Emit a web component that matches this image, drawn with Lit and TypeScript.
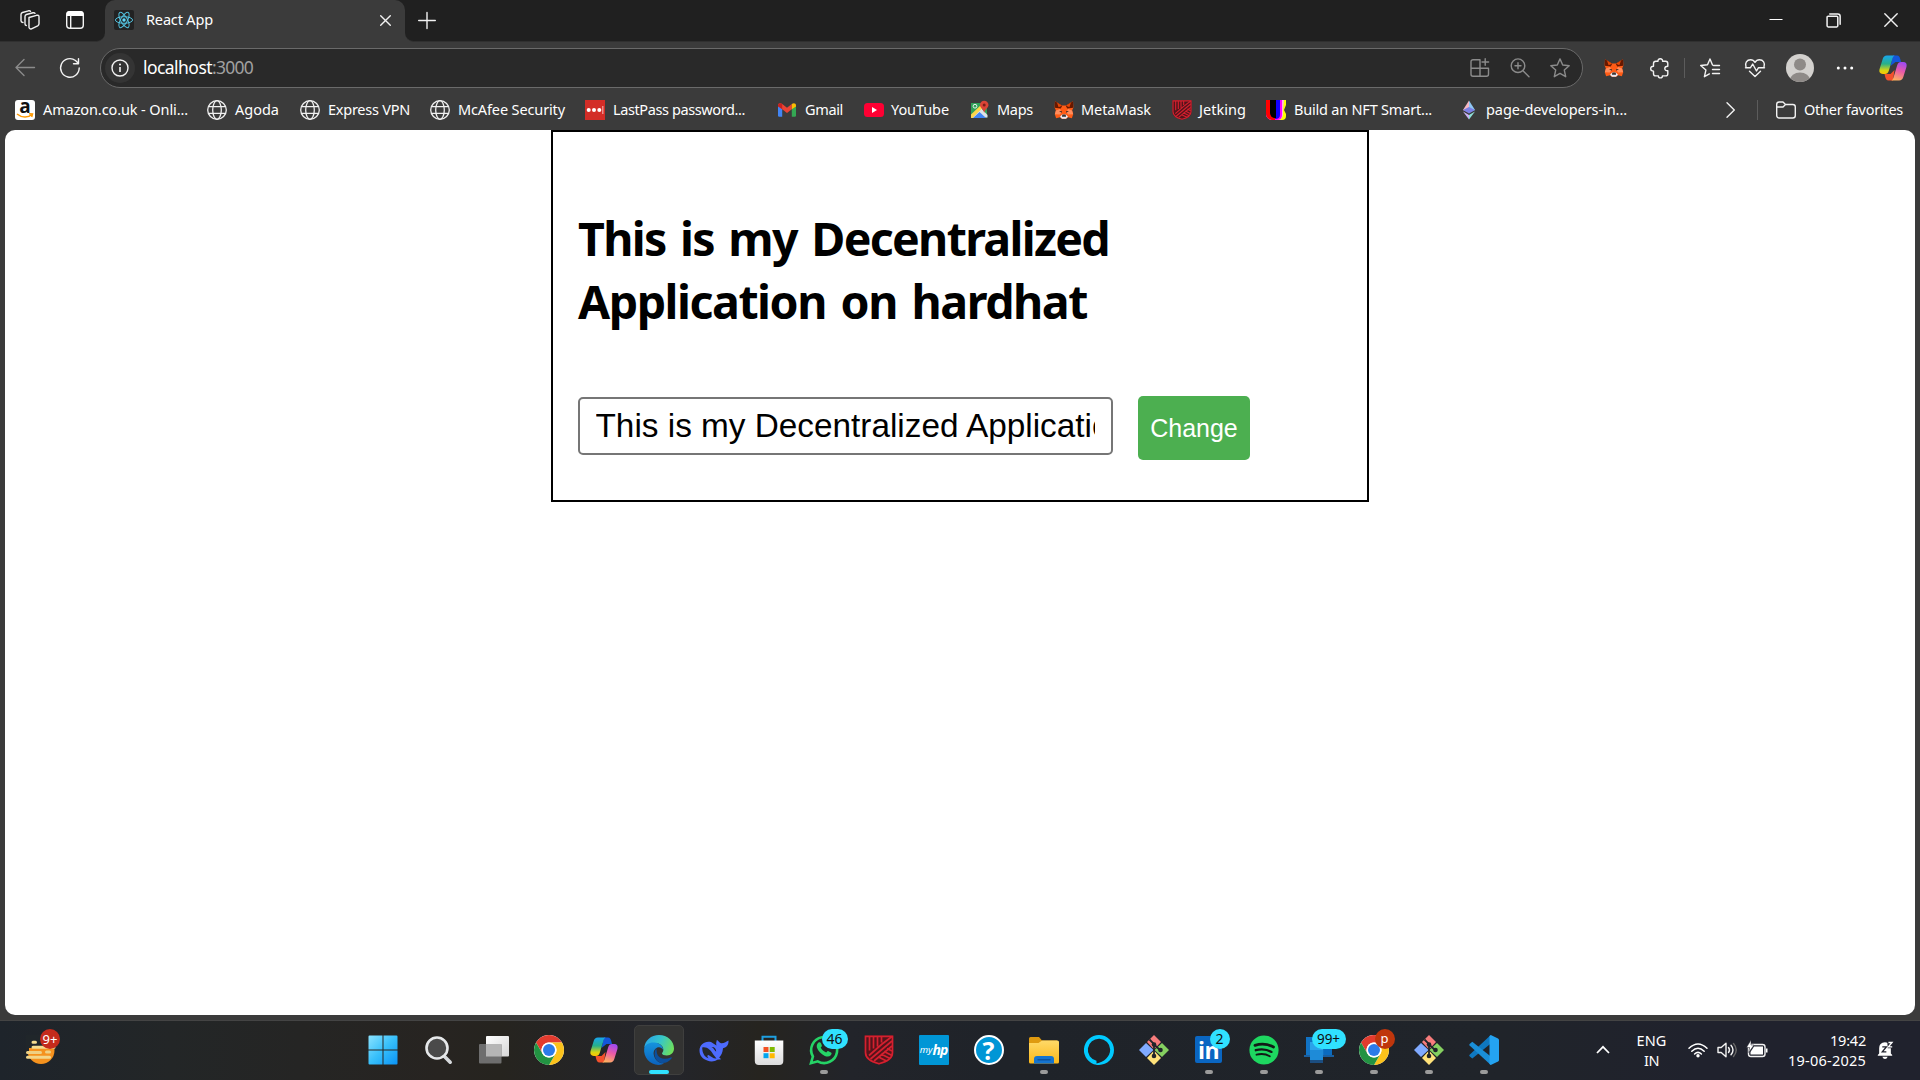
import { LitElement, html, css, svg, nothing } from "lit";
import { customElement } from "lit/decorators.js";

const fit = (text: string, width: number, cls = "") =>
  html`<span class="fit ${cls}" data-w=${width}>${text}</span>`;

const icon = (size: number, box: string, body: unknown, cls = "") =>
  html`<svg class="ico ${cls}" width=${size} height=${size} viewBox=${box}>${body}</svg>`;

const globe = () =>
  icon(20, "0 0 20 20", svg`<g fill="none" stroke="#f0f0f0" stroke-width="1.3">
    <circle cx="10" cy="10" r="9.3"/><ellipse cx="10" cy="10" rx="4.3" ry="9.3"/>
    <path d="M1.6 6.7h16.8M1.6 13.3h16.8"/></g>`);

const fox = (size: number) =>
  icon(size, "0 0 20 20", svg`
    <path d="M1 1.2 8 5.5h4l7-4.3.4 6.3-1.2 2.8 1 4-1.3 4-3.9-1-2 1.7H8l-2-1.7-3.9 1-1.3-4 1-4L.6 7.5z" fill="#ff5c16"/>
    <path d="M1 1.2 8.2 5.7 6.8 8.6.7 7.8zM19 1.2l-7.2 4.5 1.4 2.9 6.1-.8z" fill="#661800"/>
    <path d="M3 2.5 8 5.7 4.6 7.3zM17 2.5l-5 3.2 3.4 1.6z" fill="#e34807"/>
    <path d="M2 10.5 6 9l1.6 3.2-1.8 2.2-5-.2zM18 10.5 14 9l-1.6 3.2 1.8 2.2 5-.2z" fill="#ff8d5d"/>
    <path d="m5 11.2 2.7-.1.3 1.6zM15 11.2l-2.7-.1-.3 1.6z" fill="#3a2a25"/>
    <path d="m6 16.8 2.2-2.2h3.6l2.2 2.2-2 1.900H8z" fill="#e7ebf6"/>
    <path d="m8 15.5.5-.9h3l.5.9v1.2H8z" fill="#393332"/>`);

const shield = (size: number) =>
  icon(size, "0 0 30 30", svg`
    <path d="M.8.5h28.4v17c0 6-4 9.500-14.200 12C4.800 27 .8 23.500.8 17.500z" fill="#54141b"/>
    <g fill="none" stroke="#d5202f" stroke-width="1.700">
      <path d="M1.500 1.300h27v16.200c0 5.500-4 8.800-13.500 11.300C5.500 26.300 1.500 23 1.500 17.500z"/>
      <path d="M5.500 1.500v14M9.500 1.500v12M13.500 1.500v10M17.500 1.500v6M5 20.500 17.500 9.500 28 1.500M6.500 24 28 6M10 26 28 11M14.500 22l8 4M17 19l9 4.500M20 16.500l8 4M23 13.500l5 2.500"/>
    </g>`);

const copilot = (size: number, id: string, cls = "") =>
  icon(size, "0 0 28 28", svg`
    <defs>
      <linearGradient id="${id}a" x1="0" y1="0" x2="0" y2="1"><stop offset="0" stop-color="#18a5ee"/><stop offset=".45" stop-color="#27b08a"/><stop offset=".8" stop-color="#d7d514"/><stop offset="1" stop-color="#ffc400"/></linearGradient>
      <linearGradient id="${id}b" x1=".6" y1="0" x2=".3" y2="1"><stop offset="0" stop-color="#a04af0"/><stop offset=".45" stop-color="#ea5aa8"/><stop offset="1" stop-color="#ffb25e"/></linearGradient>
    </defs>
    <path d="M14 1.500h4c2 0 2.600 1.400 3.200 3.300L22 8h-5.500l-5 4z" fill="#1456d9"/>
    <path d="M14 26.500h-4.500c-2 0-2.600-1.300-3.200-3.200L5.500 20h6l4-4z" fill="#f4512c"/>
    <path d="M8 1.500h7.800c-1.600.5-2.100 2-2.700 4.200l-3.300 11C9 19 8 20 6 20H3.800C1 20-.2 18 .5 15.300L3.700 5C4.400 2.700 5.500 1.500 8 1.500z" fill="url(#${id}a)"/>
    <path d="M20 26.500h-7.800c1.600-.5 2.100-2 2.700-4.200l3.300-11C19 9 20 8 22 8h2.200c2.800 0 4 2 3.300 4.700L24.300 23c-.7 2.300-1.800 3.500-4.300 3.500z" fill="url(#${id}b)"/>`, cls);

const chrome = () =>
  icon(30, "2 2 44 44", svg`
    <circle cx="24" cy="24" r="22" fill="#fff"/>
    <path d="M24 13h19.050A22 22 0 0 0 4.950 13l9.520 16.500A11 11 0 0 1 24 13z" fill="#e33b2e"/>
    <path d="M24 13h19.050A22 22 0 0 0 4.950 13l9.520 16.500A11 11 0 0 1 24 13z" fill="#fcc21b" transform="rotate(120 24 24)"/>
    <path d="M24 13h19.050A22 22 0 0 0 4.950 13l9.520 16.500A11 11 0 0 1 24 13z" fill="#229342" transform="rotate(240 24 24)"/>
    <circle cx="24" cy="24" r="11" fill="#fff"/><circle cx="24" cy="24" r="8.800" fill="#2c7be9"/>`);

const git = () =>
  icon(30, "0 0 30 30", svg`
    <path d="M15 0l7 7-7 7.500L8 7z" fill="#f77c7c"/><path d="M23 8l7 7-7 7-7.500-7z" fill="#85d060"/>
    <path d="M15 15.500l7 7.500-7 7-7-7z" fill="#ffe27a"/><path d="M7 8l7.500 7L7 22l-7-7z" fill="#80aaff"/>
    <path d="M10.500 4.500 15 9v12M15 9.500l6 5.500" stroke="#20242a" stroke-width="1.800" fill="none"/>
    <g fill="#20242a"><circle cx="15" cy="9.500" r="2.300"/><circle cx="21.500" cy="15" r="2.300"/><circle cx="15" cy="21" r="2.300"/></g>`);

const start = icon(30, "0 0 30 30", svg`
  <defs><linearGradient id="win" x1="0" y1="0" x2="1" y2="1"><stop offset="0" stop-color="#8be3ff"/><stop offset=".5" stop-color="#37bffa"/><stop offset="1" stop-color="#0a93f5"/></linearGradient></defs>
  <path d="M1.500.5h13v14h-14V1.500a1 1 0 0 1 1-1zM15.500.5h13a1 1 0 0 1 1 1v13h-14zM.5 15.500h14v14h-13a1 1 0 0 1-1-1zM15.500 15.500h14v13a1 1 0 0 1-1 1h-13z" fill="url(#win)"/>`, "start");

const search = icon(30, "0 0 30 30", svg`
  <path d="m20.500 21.500 5.700 5.700" stroke="#d6d9dc" stroke-width="3.600" stroke-linecap="round"/>
  <circle cx="13" cy="13" r="10.500" fill="#4a4a4a" stroke="#e6e8ea" stroke-width="2.600"/>`);

const taskView = icon(30, "0 0 30 30", svg`
  <defs><linearGradient id="tv" x1="0" y1="0" x2="1" y2="1"><stop offset="0" stop-color="#fff"/><stop offset="1" stop-color="#d6d6d6"/></linearGradient></defs>
  <rect x="7" y="1" width="23" height="20.500" rx="1" fill="url(#tv)"/><rect x="0" y="9" width="22.500" height="19.500" rx="1" fill="#6e6e6e"/>
  <rect x="7" y="9" width="15.500" height="12.500" fill="#b5b5b5"/>`);

const edge = icon(30, "0 0 30 30", svg`
  <defs>
    <linearGradient id="eg1" x1="0" y1=".3" x2="1" y2=".6"><stop offset="0" stop-color="#2aa5e8"/><stop offset=".5" stop-color="#36c6c9"/><stop offset="1" stop-color="#6fe05a"/></linearGradient>
    <linearGradient id="eg2" x1="0" y1="0" x2="0" y2="1"><stop offset="0" stop-color="#1593dd"/><stop offset="1" stop-color="#0b62bd"/></linearGradient>
  </defs>
  <path d="M15 0C7 0 1 5.500.3 12.500 3 9 7.500 7.500 12 8c5 .5 7.800 4 7.300 7.500-.2 1.500-1.300 2.200-1.300 3 0 1.300 2.300 2 4.800 2 4.200 0 7.200-3 7.200-7C30 6 23.500 0 15 0z" fill="url(#eg1)"/>
  <path d="M.2 13.500C.8 9.500 5.500 7.200 10.500 7.600c5 .4 8.500 3.800 8.700 7.200-1.200-2-3-2.800-4.700-2.500-3.500.6-5.500 4-4.700 7.700C10.800 25 15 28.500 20 28.300 18.500 29.300 16.800 30 14.500 30 6 29.700-.8 22.500.2 13.500z" fill="url(#eg2)"/>
  <path d="M12.300 13.300C9.800 17 10 22 13 25.500c3.500 3.800 10 3.700 14.500-2 .5-.8 0-1.400-.8-1-6.200 2.700-12 1-13.500-3.500-.6-2-.5-4-.9-5.700z" fill="#0c4f9c"/>`);

const whale = icon(30, "0 0 30 30", svg`
  <path d="M.5 15.500C.5 9.500 6 5.500 12 7l5.500 3.500c-1-2.500.3-4.500.3-5.500 1.500.5 2.200 2.500 4.200 3.200C25 8.500 27.500 6.500 29.500 5.500c.3 4-1.500 7-5.500 7.700-.3 4.300-1.800 7-3.800 9.300l2 1.700-4 .6c-2.500 1.800-6.500 2.200-10 .7C3.500 23.800.5 20.500.5 15.500z" fill="#4d6bfe"/>
  <path d="M3.200 12.500c5-1 8.500 2.500 11.300 7.300l3 3.700c-3.500.3-5-2-8-3.500-1.800.2-1.200 2 .2 3.200-4.500-1-6.500-5.700-6.500-10.700zM12.500 12c2.500-.5 4.700 1.500 4.700 4.500-1.700-.5-2.200-3.500-4.700-4.500z" fill="#24272d"/>`);

const store = icon(30, "0 0 30 30", svg`
  <defs><linearGradient id="st" x1="0" y1="0" x2="0" y2="1"><stop offset="0" stop-color="#fff"/><stop offset="1" stop-color="#dcdcdc"/></linearGradient></defs>
  <path d="M8.500 6.500V1.800h13v4.700" fill="none" stroke="#1e9fe0" stroke-width="2"/>
  <path d="M.8 5.500h28.500V26a4 4 0 0 1-4 4H4.800a4 4 0 0 1-4-4z" fill="url(#st)"/>
  <path d="M9.500 12H14.500v5h-5z" fill="#f25022"/><path d="M15.700 12h5v5h-5z" fill="#7fba00"/><path d="M9.500 18.200h5v5h-5z" fill="#00a4ef"/><path d="M15.700 18.200h5v5h-5z" fill="#ffb900"/>`);

const whatsapp = icon(30, "0 0 30 30", svg`
  <path d="M2 28.200 3.900 21.500A13 13 0 1 1 8.700 26.300z" fill="none" stroke="#25d366" stroke-width="2.600"/>
  <path d="M9.500 7.500c1-.6 2-.4 2.500.8l.8 2c.3.900-.3 1.500-1.100 2.300 1.300 2.400 3 3.900 5.500 5 .9-1 1.500-1.800 2.300-1.400l2.500 1.300c1 .6.500 2-.2 2.800-1.500 1.500-3.500 1.600-6 .6C12 19.200 9 16 7.900 12.600c-.5-2 .2-4.200 1.600-5.100z" fill="#25d366"/>`);

const myhp = html`<span class="myhp"><i>my</i><b>hp</b></span>`;
const help = html`<span class="help">?</span>`;
const linkedin = html`<span class="linkedin">in</span>`;

const folder = icon(30, "0 0 30 30", svg`
  <defs><linearGradient id="fo" x1="0" y1="0" x2="0" y2="1"><stop offset="0" stop-color="#ffd968"/><stop offset="1" stop-color="#fbb81a"/></linearGradient></defs>
  <path d="M0 3.500A1.500 1.500 0 0 1 1.500 2H10l3 3.500h15V12H0z" fill="#df9a10"/>
  <path d="M0 8h9.500L13 5.500h15.500A1.500 1.500 0 0 1 30 7v20a1.500 1.500 0 0 1-1.500 1.500h-27A1.500 1.500 0 0 1 0 27z" fill="url(#fo)"/>
  <path d="M5 28.500V24a3 3 0 0 1 3-3h14a3 3 0 0 1 3 3v4.500z" fill="#1574cf"/><path d="M8.500 24.800h13" stroke="#0c4d94" stroke-width="1.200"/>`);

const alexa = icon(30, "0 0 30 30", svg`
  <path fill-rule="evenodd" d="M15 0a15 15 0 0 0-2.500 29.800v-4A11.200 11.200 0 1 1 26.200 14.500C26 22 20 27 12.500 28.500V30H15A15 15 0 0 0 15 0z" fill="#00caff"/>`);

const spotify = icon(30, "0 0 30 30", svg`
  <circle cx="15" cy="15" r="14.600" fill="#1ed760"/>
  <g fill="none" stroke="#121a16" stroke-linecap="round"><path d="M6 10.300c6-1.800 13-1.200 18.500 1.700" stroke-width="2.800"/><path d="M6.800 15.200c5-1.500 11-.9 15.700 1.700" stroke-width="2.300"/><path d="M7.500 19.700c4.500-1.200 9.500-.7 13.300 1.500" stroke-width="1.900"/></g>`);

const phoneLink = icon(30, "0 0 30 30", svg`
  <path d="M2 2h20v18H2z" fill="#1173c4"/><path d="M0 20h30v2H0z" fill="#1a5fa0"/><path d="M20 12h8v8h-8z" fill="#0b6bbf"/>
  <path d="M6 7h13v17H6z" fill="#2aa3ea"/><path d="M6 15h13v10H6z" fill="#1e8bd8"/><path d="M6 25h13v3H6z" fill="#1b4d80"/>`);

const vscode = icon(30, "0 0 30 30", svg`
  <path d="M21.800 0v8.500L3.300 23.500.6 21.200a1 1 0 0 1 0-1.500z" fill="#0f78c0"/>
  <path d="M21.800 30v-8.500L3.300 6.700.6 9a1 1 0 0 0 0 1.400z" fill="#1a8fd8"/>
  <path d="M21.800 0 29 3.500q1 .5 1 1.500v20q0 1-1 1.500L21.800 30 20.500 29V1z" fill="#24a3f1"/>`);

const bookmarks: Array<[unknown, string, number]> = [
  [html`<span class="amazon"><b>a</b><svg width="18" height="6" viewBox="0 0 18 6"><path d="M1 1c5 4 11 4 15 .5M13 .8l3.500.2-.8 3" fill="none" stroke="#f90" stroke-width="1.500"/></svg></span>`, "Amazon.co.uk - Onli...", 145],
  [globe(), "Agoda", 44],
  [globe(), "Express VPN", 82],
  [globe(), "McAfee Security", 107],
  [icon(20, "0 0 20 20", svg`<path d="M0 0h20v20H0z" fill="#d32d27"/><g fill="#fff"><circle cx="3.700" cy="10" r="2"/><circle cx="9" cy="10" r="2"/><circle cx="14.300" cy="10" r="2"/></g><path d="M17.800 6v8" stroke="#f0a8a5" stroke-width="1.200"/>`), "LastPass password...", 132],
  [icon(20, "0 0 20 20", svg`<path d="M1 5.500v10A1.200 1.200 0 0 0 2.200 16.700H5.200V8z" fill="#4285f4"/><path d="M19 5.500v10a1.200 1.200 0 0 1-1.200 1.200h-3V8z" fill="#34a853"/><path d="M1 5.500C1 3 3.500 2.500 5.200 4L10 7.700 14.800 4v5.200L10 13 5.200 9.200z" fill="#ea4335"/><path d="M1 5.500C1 3 3.500 2.500 5.200 4v5.200L1 6.500z" fill="#c5221f"/><path d="M19 5.500C19 3 16.500 2.500 14.800 4v5.200L19 6.500z" fill="#fbbc04"/>`), "Gmail", 38],
  [icon(20, "0 0 20 20", svg`<rect x="0" y="3" width="20" height="14" rx="3.500" fill="#ff0033"/><path d="m8 7 5 3-5 3z" fill="#fff"/>`), "YouTube", 58],
  [icon(20, "0 0 20 20", svg`<path d="M1 3h12l4 5v9.500H1z" fill="#2f9f57"/><path d="M1 18 11 8l6.500 7v2.500z" fill="#dfe3e8"/><path d="m3 18 6.500-6L16 18z" fill="#4285f4"/><path d="M1 14.500 12 4l2 2.500L2.500 18H1z" fill="#fdd64b"/><circle cx="5" cy="6.200" r="1.900" fill="none" stroke="#e8f5ec" stroke-width="1"/><path d="M14.200.7a4.300 4.300 0 0 0-4.300 4.300c0 2.800 3.500 4 4.300 8 .8-4 4.300-5.200 4.300-8A4.300 4.300 0 0 0 14.200.7z" fill="#db4437"/><circle cx="14.200" cy="5" r="1.500" fill="#7b1f18"/>`), "Maps", 36],
  [fox(20), "MetaMask", 70],
  [shield(20), "Jetking", 47],
  [icon(20, "0 0 20 20", svg`<path d="M0 0h20v5l-2 5 2 4v2a4 4 0 0 1-4 4H7a7 7 0 0 1-7-7z" fill="#ff0"/><path d="M0 0h18l-1 10v5q-1 5-5 5H6q-6-1-6-7z" fill="#ffb0e8"/><path d="M0 0h16v15q0 5-5 5H6q-6-1-6-7z" fill="#f0f"/><path d="M0 0h14v15q0 4-5 4H6q-6-1-6-7z" fill="#10f"/><path d="M0 0h9v20H6Q0 19 0 13z" fill="#f00"/><path d="M4 0h6v18H8q-4-1-4-5z" fill="#000"/>`), "Build an NFT Smart...", 138],
  [icon(20, "0 0 20 20", svg`<path d="M10 .5v12L4 10z" fill="#f6b8c4"/><path d="M10 .5v12l6-2.500z" fill="#8fc7f5"/><path d="m10 7 6 3-6 3.500L4 10z" fill="#7b80e6"/><path d="M4 11.500 10 15v4.500z" fill="#c9b3f5"/><path d="M16 11.500 10 15v4.500z" fill="#8fe0d8"/>`), "page-developers-in...", 141],
];

interface App { glyph: unknown; badge?: string; kind?: string; run?: boolean; active?: boolean }
const apps: App[] = [
  { glyph: start }, { glyph: search }, { glyph: taskView }, { glyph: chrome() },
  { glyph: copilot(28, "c1") }, { glyph: edge, active: true }, { glyph: whale }, { glyph: store },
  { glyph: whatsapp, badge: "46", run: true }, { glyph: shield(30) }, { glyph: myhp }, { glyph: help },
  { glyph: folder, run: true }, { glyph: alexa }, { glyph: git() },
  { glyph: linkedin, badge: "2", kind: "one", run: true }, { glyph: spotify, run: true },
  { glyph: phoneLink, badge: "99+", kind: "wide", run: true },
  { glyph: chrome(), badge: "p", kind: "user", run: true }, { glyph: git(), run: true }, { glyph: vscode, run: true },
];

@customElement("app-root")
export class AppRoot extends LitElement {
  static styles = css`
    :host { display: flex; flex-direction: column; width: 1920px; height: 1080px; overflow: hidden; background: #3b3b3b;
      color: #fff; font: 14.5px/20px "Noto Sans", "Open Sans", sans-serif; }
    * { box-sizing: border-box; }
    .ico { display: block; flex: none; overflow: visible; }
    .fit { white-space: pre; flex: none; }
    .line { fill: none; stroke: #f2f2f2; stroke-width: 1.4; stroke-linejoin: round; stroke-linecap: round; }
    .dim { fill: none; stroke: #8b8b8b; stroke-width: 1.4; stroke-linejoin: round; stroke-linecap: round; }

    .tabs { height: 42px; background: #202020; display: flex; flex: none; }
    .lead { width: 105px; display: flex; align-items: center; padding: 0 0 2px 20px; gap: 25px; border-bottom: 1px solid #303030; border-radius: 0 0 9px 0; background: #202020; }
    .lead-wrap, .rest-wrap { background: #3b3b3b; display: flex; }
    .rest-wrap { flex: 1; }
    .tab { width: 300px; background: #3b3b3b; border-radius: 10px 10px 0 0; display: flex; align-items: center; padding: 0 14px 2px 9px; }
    .tab-corner { background: #202020; display: flex; }
    .tab-title { margin-left: 12px; flex: 1; padding-bottom: 2px; }
    .rest { flex: 1; background: #202020; border-bottom: 1px solid #303030; border-radius: 0 0 0 9px; display: flex; align-items: center; padding: 0 22px 0 13px; }
    .winbtns { margin-left: auto; display: flex; gap: 43px; }

    .toolbar { height: 52px; flex: none; display: flex; align-items: center; padding: 0 13px 0 15px; }
    .back { margin-right: 25px; }
    .address { margin-left: 20px; width: 1483px; flex: none; height: 40px; border: 1px solid #6a6a6a; border-radius: 20px; background: #292929; display: flex; align-items: center; padding: 0 12px 0 4px; }
    .info { width: 30px; height: 30px; border-radius: 15px; background: #343434; display: grid; place-items: center; margin-right: 8px; }
    .url { display: flex; font-size: 17.5px; line-height: 24px; padding-bottom: 2px; }
    .port { color: #a0a0a0; }
    .addr-tools { margin-left: auto; display: flex; gap: 20px; }
    .tools { flex: 1; display: flex; align-items: center; padding-left: 21px; }
    .sep { width: 1px; height: 20px; background: #5c5c5c; }
    .t-puzzle { margin-left: 26px; margin-right: 14px; }
    .t-star { margin-left: 15px; }
    .t-heart { margin-left: 25px; }
    .t-user { margin-left: 21px; }
    .t-more { margin-left: 21px; }
    .t-cop { margin-left: auto; }

    .favs { height: 36px; flex: none; padding: 0 17px 4px 15px; display: flex; align-items: center; }
    .favs .fit { display: block; padding-bottom: 2px; }
    .fav-grid { display: grid; grid-template-columns: 192px 93px 130px 155px 192px 87px 106px 84px 118px 94px 193px 180px; }
    .fav { display: flex; align-items: center; gap: 8px; }
    .fav:nth-child(n+7) { gap: 7px; }
    .fav:nth-child(n+11) { gap: 8px; }
    .fav:nth-child(n+12) { gap: 7px; }
    .fav-end { margin-left: auto; display: flex; align-items: center; }
    .fav-end .sep { margin: 0 18px 0 18px; }
    .other { margin-left: 8px; }
    .amazon { width: 20px; height: 20px; border-radius: 3px; background: #fff; color: #111; display: flex; flex-direction: column; align-items: center; }
    .amazon b { font: bold 19px/14px "Open Sans", sans-serif; height: 14px; margin-top: -1px; }

    .page { height: 885px; margin: 0 5px; flex: none; background: #fff; border-radius: 10px; color: #000; }
    .card { width: 818px; height: 372px; margin-left: 546px; border: 2px solid #000; padding: 75px 25px 0; }
    h1 { margin: 0; font: bold 46.5px/63px "Noto Sans", "Open Sans", sans-serif; word-spacing: 4px; display: flex; flex-direction: column; align-items: flex-start; }
    .form { display: flex; margin-top: 63px; align-items: flex-start; }
    .field { margin-top: 1px; width: 535px; height: 58px; border: 2px solid #767676; border-radius: 5px; padding: 0 16px 0 15.500px; font: 33.33px/54px "Liberation Sans", Arial, sans-serif; background: #fff; color: #000; }
    .change { margin-left: 25px; width: 112px; height: 64px; border: 0; border-radius: 5px; background: #4caf50; color: #fff; font: 25px/30px "Liberation Sans", Arial, sans-serif; padding: 0; }

    .taskbar { margin-top: 5px; flex: 1; display: flex; align-items: center; padding-bottom: 2px; border-top: 1px solid #444; background: linear-gradient(90deg, #1e242b 0, #232627 170px, #252524 300px, #272421 440px, #26241f 500px, #23252c 660px, #26241f 760px, #22242a 850px, #1f2329 1000px, #20242a 1500px, #20222d 1700px, #20222d); }
    .weather { width: 356px; padding-left: 26px; display: flex; }
    .start { margin-left: -2px; }
    .holder { position: relative; width: 29px; height: 30px; }
    .badge { position: absolute; display: grid; place-items: center; font: 13px/20px "Noto Sans", sans-serif; height: 20px; min-width: 20px; border-radius: 10px; background: #30e1ff; color: #101010; right: -10px; top: -6px; z-index: 1; }
    .badge.pair { width: 26px; right: -9px; font-size: 14px; }
    .badge.one { right: -6px; font-size: 14px; }
    .badge.wide { width: 34px; right: -12px; font-size: 13.5px; }
    .badge.user { background: #bf360c; color: #fff; right: -6px; line-height: 17px; }
    .badge.nine { background: #c42b1c; color: #fff; right: -5px; top: -6px; font-size: 13px; }
    .apps { display: flex; }
    .cell { width: 55px; height: 50px; padding: 0 2.500px; display: flex; }
    .tile { position: relative; flex: 1; display: grid; place-items: center; border-radius: 5px; border: 1px solid transparent; }
    .tile.active { background: #333332; border-color: #3f3f3e; }
    .slot { position: relative; width: 30px; height: 30px; display: grid; place-items: center; }
    .mark { position: absolute; bottom: 0; left: 20px; width: 8px; height: 4px; border-radius: 2px; background: #9b9b9b; }
    .active .mark { left: 14px; width: 20px; background: #30e1ff; }
    .myhp { width: 30px; height: 30px; background: #0096d6; border-radius: 1px; display: flex; align-items: center; justify-content: center; font: italic 9.500px/30px "Noto Sans", sans-serif; }
    .myhp b { font-size: 14px; font-style: italic; letter-spacing: -1px; }
    .help { width: 30px; height: 30px; border-radius: 15px; border: 2px solid #fff; background: #0096d6; display: grid; place-items: center; font: bold 25px/26px "Open Sans", sans-serif; }
    .linkedin { width: 27px; height: 27px; border-radius: 2px; background: #0a66c2; font: bold 23px/28px "Open Sans", sans-serif; text-align: center; letter-spacing: -0.5px; }

    .tray { margin-left: auto; display: flex; align-items: center; padding-right: 26px; }
    .lang { display: flex; flex-direction: column; align-items: center; margin: 0 21px 0 26px; width: 31px; }
    .status { display: flex; gap: 9px; align-items: center; }
    .clock { display: flex; flex-direction: column; align-items: flex-end; margin: 0 10px 0 19px; width: 79px; }
  `;

  firstUpdated() {
    this.renderRoot.querySelectorAll<HTMLElement>(".fit").forEach((el) => {
      const target = Number(el.dataset.w);
      const natural = el.getBoundingClientRect().width;
      el.style.letterSpacing = `${((target - natural) / (el.textContent ?? " ").length).toFixed(3)}px`;
    });
  }

  private tabs() {
    return html`<div class="tabs">
      <div class="lead-wrap"><div class="lead">
        ${icon(20, "0 0 20 20", svg`<g class="line"><path d="M9 7.500 16.500 5.300q2.500-.5 2.500 1.500v7q0 1.300-1.300 2l-6.200 3q-2 .6-2.500-1.400z" /><path d="M6.300 15.500q-1.300-.2-1.300-1.700V6.500q0-1.500 1.500-2L13 2.800q1.500-.3 2 .5M3 12.500q-2-.2-2-1.700V4.500q0-1.500 1.500-2L8.500.8q1.500-.3 2 .5"/></g>`)}
        ${icon(20, "0 0 20 20", svg`<rect class="line" x="1.700" y="1.700" width="16.600" height="16.600" rx="3"/><path d="M1.500 6V4a3 3 0 0 1 3-3h11a3 3 0 0 1 3 3v2z" fill="#fff"/><path class="line" d="M5.700 6v12"/>`)}
      </div></div>
      <div class="tab-corner"><div class="tab">
        ${icon(20, "0 0 20 20", svg`<rect width="20" height="20" rx="2" fill="#222"/><g fill="none" stroke="#53c1de" stroke-width="1"><ellipse cx="10" cy="10" rx="8.600" ry="3.300"/><ellipse cx="10" cy="10" rx="8.600" ry="3.300" transform="rotate(60 10 10)"/><ellipse cx="10" cy="10" rx="8.600" ry="3.300" transform="rotate(120 10 10)"/></g><circle cx="10" cy="10" r="1.700" fill="#61dafb"/>`)}
        <span class="tab-title">${fit("React App", 67)}</span>
        ${icon(11, "0 0 11 11", svg`<path class="line" d="m.7 .7 9.600 9.600M10.300.7.7 10.300"/>`)}
      </div></div>
      <div class="rest-wrap"><div class="rest">
        ${icon(18, "0 0 18 18", svg`<path class="line" d="M9 .5v16M.7 8.500h16.600"/>`)}
        <div class="winbtns">
          ${icon(14, "0 0 14 14", svg`<path d="M.5 6.500h13" stroke="#fff"/>`)}
          ${icon(15, "0 0 14 14", svg`<g class="line"><rect x="1" y="3" width="10" height="10" rx="1"/><path d="M3.500.9h7.500q2.200 0 2.200 2.200v7.400"/></g>`)}
          ${icon(14, "0 0 14 14", svg`<path class="line" d="m.8.800 12.400 12.400M13.200.8.8 13.200"/>`)}
        </div>
      </div></div>
    </div>`;
  }

  private toolbar() {
    return html`<div class="toolbar">
      ${icon(20, "0 0 20 20", svg`<path class="dim" d="M19.500 9.500H1M9 1.500l-8 8 8 8"/>`, "back")}
      ${icon(20, "0 0 20 20", svg`<path class="line" stroke-width="1.600" d="M19.200 10A9.300 9.300 0 1 1 15.500 2.500L18.500 5.500M18.500.8v5h-5"/>`)}
      <div class="address">
        <div class="info">${icon(18, "0 0 18 18", svg`<circle class="line" cx="9" cy="9" r="8"/><path d="M9 8v5" stroke="#fff" stroke-width="1.500"/><circle cx="9" cy="5.500" r="1" fill="#fff"/>`)}</div>
        <div class="url">${fit("localhost", 69)}${fit(":3000", 41, "port")}</div>
        <div class="addr-tools">
          ${icon(20, "0 0 20 20", svg`<path class="dim" d="M10 1.700H3a2 2 0 0 0-2 2v12.600a2 2 0 0 0 2 2h13.500a2 2 0 0 0 2-2V10.300H1M10 1.700v16.600M15.200 .7v6.600M12 4h6.600"/>`)}
          ${icon(20, "0 0 20 20", svg`<g class="dim"><circle cx="8" cy="7.700" r="6.800"/><path d="m13 12.700 6 6M8 4.700v6M5 7.700h6"/></g>`)}
          ${icon(20, "0 0 20 20", svg`<path class="dim" d="m10 .9 2.700 6.100 6.500.7-4.900 4.400 1.400 6.600-5.700-3.300-5.700 3.300 1.400-6.600L.8 7.700 7.300 7z"/>`)}
        </div>
      </div>
      <div class="tools">
        ${fox(20)}
        ${icon(20, "0 0 20 20", svg`<path class="line" d="M3.500 5.500q0-2.300 2.300-2.300H8Q7.800.8 10.300.8t2.300 2.400h3q2.200 0 2.200 2.300v2.700q-3 0-3 2.300t3 2.200v3q0 2.200-2.200 2.200h-3.200q0 2-2 2t-2-2H5.800q-2.300 0-2.300-2.200v-2.500Q.7 13.200.7 10.700t2.800-2.400z"/>`, "t-puzzle")}
        <div class="sep"></div>
        ${icon(20, "0 0 20 20", svg`<path class="line" d="M12.500 7 10 1 7.500 6.700.7 7.500l5.200 4.600-1.500 6.600 5-2.800M13.500 7.500h6M12.500 11.500h7M12.500 15.500h7"/>`, "t-star")}
        ${icon(20, "0 0 20 20", svg`<path class="line" d="M1 9C-.5 5 2 1.700 5.500 1.700q3 0 4.500 2.600 1.500-2.600 4.500-2.600C18 1.700 20.500 5 19 9M.5 9.700h5L7.700 6l3.800 7 2-3.300h6M4.500 13.200 10 18.500l5.500-5.300"/>`, "t-heart")}
        ${icon(28, "0 0 28 28", svg`<defs><clipPath id="av"><circle cx="14" cy="14" r="14"/></clipPath></defs><g clip-path="url(#av)"><path d="M0 0h28v28H0z" fill="#d3d1ce"/><circle cx="14" cy="10.500" r="6" fill="#8e8a87"/><ellipse cx="14" cy="26" rx="10" ry="7.500" fill="#8e8a87"/></g>`, "t-user")}
        ${icon(20, "0 0 20 20", svg`<g fill="#fff"><circle cx="3.300" cy="10" r="1.500"/><circle cx="10" cy="10" r="1.500"/><circle cx="16.700" cy="10" r="1.500"/></g>`, "t-more")}
        ${copilot(28, "c0", "t-cop")}
      </div>
    </div>`;
  }

  private favs() {
    return html`<div class="favs">
      <div class="fav-grid">${bookmarks.map(([g, t, w]) => html`<div class="fav">${g}${fit(t, w)}</div>`)}</div>
      <div class="fav-end">
        ${icon(16, "0 0 16 16", svg`<path class="line" d="m4 .700 7.300 7.300L4 15.300"/>`)}
        <div class="sep"></div>
        ${icon(20, "0 0 20 20", svg`<path class="line" d="M.7 4.500a2.500 2.500 0 0 1 2.500-2.500H7l2.500 2.500h7.300A2.500 2.500 0 0 1 19.300 7v8.500a2.500 2.500 0 0 1-2.500 2.500H3.200A2.500 2.500 0 0 1 .7 15.500zM.7 7H7l2.500-2.500"/>`)}
        <span class="other">${fit("Other favorites", 99)}</span>
      </div>
    </div>`;
  }

  private taskbar() {
    return html`<div class="taskbar">
      <div class="weather"><div class="holder">
        ${icon(30, "0 0 30 30", svg`<circle cx="15" cy="15.500" r="13.500" fill="#f5921e"/><path d="M0 0h30v13H0zM0 13h3v5H0z" fill="#20262a"/><g stroke="#f5dc8e" stroke-width="3" stroke-linecap="round"><path d="M7 7.300h2.500M7 12.300h21" /><path d="M1.500 17.500h13M20.500 17h3" stroke="#efd084"/><path d="M1.500 22.300h22" stroke="#f3d68a"/></g>`)}
        <span class="badge nine">9+</span>
      </div></div>
      <div class="apps">${apps.map((a) => html`<div class="cell"><div class="tile ${a.active ? "active" : ""}">
        <div class="slot">${a.glyph}${a.badge ? html`<span class="badge ${a.kind ?? "pair"}">${a.badge}</span>` : nothing}</div>
        ${a.run || a.active ? html`<span class="mark"></span>` : nothing}
      </div></div>`)}</div>
      <div class="tray">
        ${icon(14, "0 0 14 14", svg`<path d="m1 10 6-6.200 6 6.200" fill="none" stroke="#fff" stroke-width="1.700"/>`)}
        <div class="lang">${fit("ENG", 30)}${fit("IN", 15)}</div>
        <div class="status">
          ${icon(20, "0 0 20 20", svg`<g fill="none" stroke="#fff" stroke-width="1.500" stroke-linecap="round"><path d="M1 8.300q9-8.600 18 0M3.800 11.200q6.200-6 12.400 0M6.600 14q3.400-3.200 6.800 0"/></g><circle cx="10" cy="15.800" r="1.700" fill="#fff"/>`)}
          ${icon(20, "0 0 20 20", svg`<g class="line"><path d="M1 7.500h3.200L9 3.200v13.600L4.200 12.500H1zM11.500 7.500q2 2.500 0 5M14 5.200q4 4.800 0 9.600"/><path d="M16.500 3.500q5.500 6.500 0 13" stroke="#666"/></g>`)}
          ${icon(22, "0 0 22 20", svg`<rect class="line" x="2.500" y="4.500" width="16.500" height="12" rx="2.500"/><path d="M20 8.500h1.500v4H20z" fill="#fff"/><path d="M8 6.500h9v8H4.500V12z" fill="#fff"/><path d="M5 0 .5 7.500h3L2.700 12.500 8 5H5z" fill="#fff" stroke="#20222d" stroke-width=".5"/>`)}
        </div>
        <div class="clock">${fit("19:42", 36)}${fit("19-06-2025", 78)}</div>
        ${icon(18, "0 0 18 20", svg`<path d="M2.500 14V8q0-6 6.500-6.500 6.500.5 6.500 6.500v6l1.500 1.500v1H1v-1zM6 17.500h6Q11 20 9 20t-3-2.500z" fill="#fff"/><path d="M6 6.500h4.500L6 12h4.500" stroke="#20222d" stroke-width="1.500" fill="none"/><path d="M11.500.500h6.500V8h-6z" fill="#20222d"/><path d="M12.800 1.700h4L12.800 6.500h4.200" stroke="#fff" stroke-width="1.500" fill="none"/>`)}
      </div>
    </div>`;
  }

  render() {
    return html`${this.tabs()}${this.toolbar()}${this.favs()}
      <main class="page"><section class="card">
        <h1>${fit("This is my Decentralized", 531)}${fit("Application on hardhat", 509)}</h1>
        <div class="form">
          <input class="field" .value=${"This is my Decentralized Application on hardhat"} />
          <button class="change">Change</button>
        </div>
      </section></main>
      ${this.taskbar()}`;
  }
}
